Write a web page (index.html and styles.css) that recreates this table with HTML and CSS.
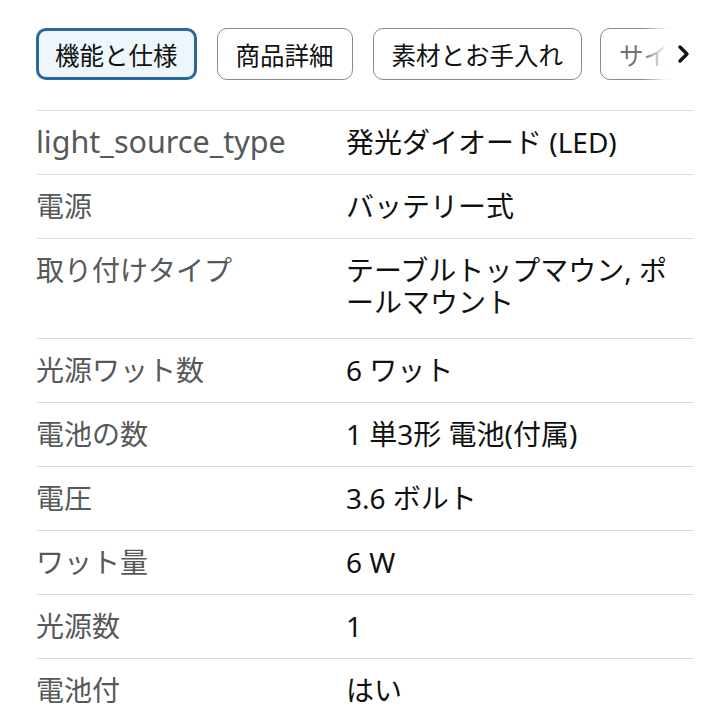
FILE: index.html
```html
<!DOCTYPE html>
<html lang="ja">
<head>
<meta charset="utf-8">
<link rel="stylesheet" href="styles.css">
</head>
<body>
<div class="page">
  <div class="tabs-wrap">
    <div class="tabs">
      <button class="tab active">機能と仕様</button>
      <button class="tab">商品詳細</button>
      <button class="tab">素材とお手入れ</button>
      <button class="tab">サイズ</button>
    </div>
    <div class="fade">
      <svg class="chev" width="14" height="20" viewBox="0 0 14 20"><path d="M3 3 L10 10 L3 17" fill="none" stroke="#111" stroke-width="3.4" stroke-linecap="round" stroke-linejoin="round"/></svg>
    </div>
  </div>
  <table class="specs">
    <tr><th><span class="latin">light_source_type</span></th><td>発光ダイオード (LED)</td></tr>
    <tr><th>電源</th><td>バッテリー式</td></tr>
    <tr class="tall"><th>取り付けタイプ</th><td>テーブルトップマウン, ポールマウント</td></tr>
    <tr><th>光源ワット数</th><td>6 ワット</td></tr>
    <tr><th>電池の数</th><td>1 単3形 電池(付属)</td></tr>
    <tr><th>電圧</th><td>3.6 ボルト</td></tr>
    <tr><th>ワット量</th><td>6 W</td></tr>
    <tr><th>光源数</th><td>1</td></tr>
    <tr><th>電池付</th><td>はい</td></tr>
  </table>
</div>
</body>
</html>
```
FILE: styles.css
```css
* { box-sizing: border-box; }
html, body { margin: 0; padding: 0; background: #fff; }
body {
  font-family: "Noto Sans", "Noto Sans CJK JP", sans-serif;
  color: #0f1111;
}
.page { padding: 28px 27px 0 36px; }
.tabs-wrap {
  position: relative;
  overflow: hidden;
  height: 82px;
}
.tabs {
  display: flex;
  gap: 20px;
  white-space: nowrap;
}
.tab {
  font-family: "Noto Sans CJK JP", sans-serif;
  font-size: 24.5px;
  color: #0f1111;
  background: #fff;
  border: 1px solid #888c8c;
  border-radius: 10px;
  height: 52px;
  padding: 0 18px;
  flex: none;
}
.tab.active {
  border: 3px solid #2b679c;
  background: #edf6fb;
  padding: 0 16px;
}
.tab:last-child { color: #6f7373; margin-left: -2px; }
.fade {
  position: absolute;
  top: 0;
  right: 0;
  width: 50px;
  height: 52px;
  background: linear-gradient(to right, rgba(255,255,255,0) 0%, rgba(255,255,255,0.85) 40%, #fff 60%);
  display: flex;
  align-items: center;
  justify-content: flex-end;
  padding-right: 2px;
}
.specs {
  width: 100%;
  border-collapse: collapse;
  font-size: 28px;
}
.specs tr { border-top: 1px solid #dddddd; }
.specs th, .specs td {
  text-align: left;
  vertical-align: top;
  font-weight: normal;
  line-height: 32px;
  padding: 15px 0 16px;
}
.specs th { width: 310px; color: #565959; }
.specs th .latin { font-size: 30.5px; line-height: 26px; }
.specs td { color: #0f1111; padding-right: 16px; line-break: anywhere; }
.specs tr.tall th, .specs tr.tall td { padding-bottom: 20px; }
```
